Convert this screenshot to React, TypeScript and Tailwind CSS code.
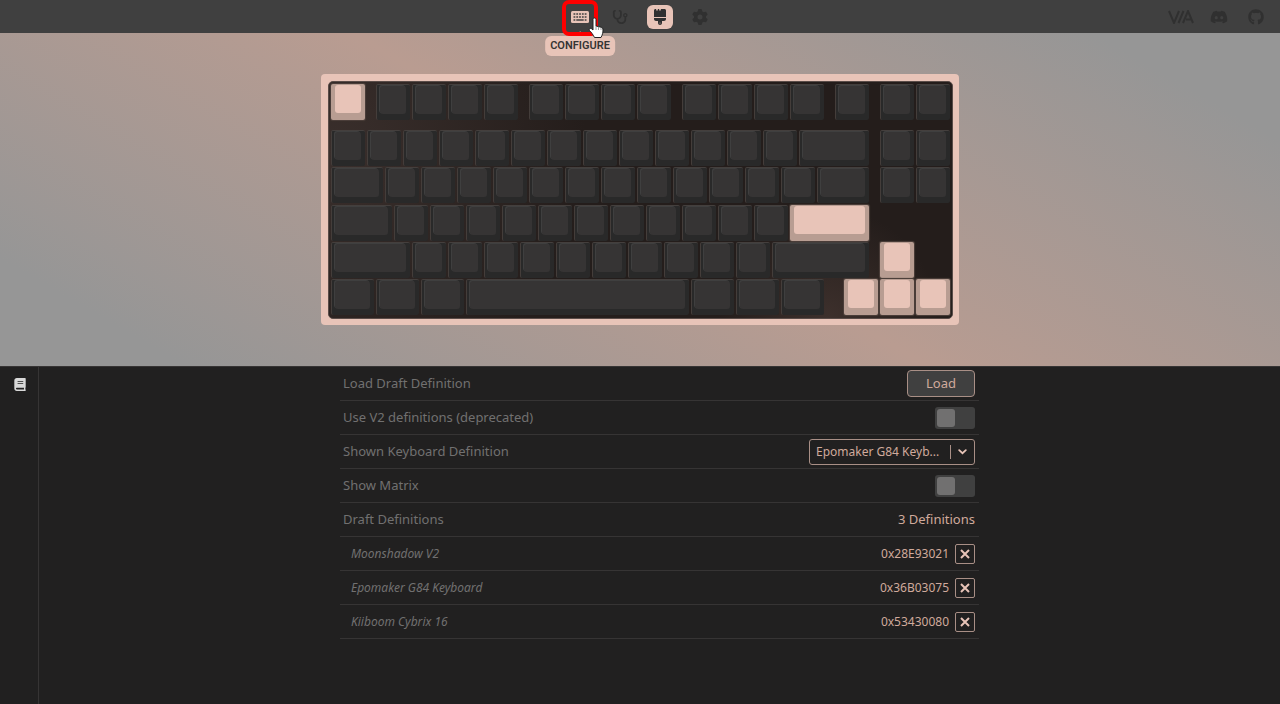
import React from 'react';
import { FaDiscord, FaGear, FaGithub, FaStethoscope, FaBrush } from 'react-icons/fa6';
import { FaBook } from 'react-icons/fa';

type Key = {
  start: number;
  width: number;
  accent?: boolean;
};

// Positions and widths are in quarters of a key unit.
const run = (start: number, count: number): Key[] =>
  Array.from({ length: count }, (_, i) => ({ start: start + i * 4, width: 4 }));

const keyRows: Key[][] = [
  [
    { start: 0, width: 4, accent: true },
    ...run(5, 4),
    ...run(22, 4),
    ...run(39, 4),
    ...run(56, 1),
    ...run(61, 2),
  ],
  [...run(0, 13), { start: 52, width: 8 }, ...run(61, 2)],
  [{ start: 0, width: 6 }, ...run(6, 12), { start: 54, width: 6 }, ...run(61, 2)],
  [{ start: 0, width: 7 }, ...run(7, 11), { start: 51, width: 9, accent: true }],
  [
    { start: 0, width: 9 },
    ...run(9, 10),
    { start: 49, width: 11 },
    { start: 61, width: 4, accent: true },
  ],
  [
    { start: 0, width: 5 },
    { start: 5, width: 5 },
    { start: 10, width: 5 },
    { start: 15, width: 25 },
    { start: 40, width: 5 },
    { start: 45, width: 5 },
    { start: 50, width: 5 },
    { start: 57, width: 4, accent: true },
    { start: 61, width: 4, accent: true },
    { start: 65, width: 4, accent: true },
  ],
];

const drafts = [
  { name: 'Moonshadow V2', id: '0x28E93021' },
  { name: 'Epomaker G84 Keyboard', id: '0x36B03075' },
  { name: 'Kiiboom Cybrix 16', id: '0x53430080' },
];

function Keycap({ start, width, accent }: Key) {
  return (
    <div
      className={`mr-[2px] flex h-9 rounded-[2px] pt-px ${
        accent
          ? 'bg-[#b89d92] px-1 pb-[7px] shadow-[0_0_1px_1px_#4d403b]'
          : 'border-t border-l border-t-[#443f3d] border-l-[#443d3a] bg-[#292929] pr-1 pb-[6px] pl-[3px]'
      }`}
      style={{ gridColumn: `${start + 1} / span ${width}` }}
    >
      <div
        className={`flex-1 rounded-[3px] ${
          accent ? 'bg-[#e8c4b8]' : 'bg-[#363434] shadow-[-1px_-1px_0_#3f3f3f]'
        }`}
      />
    </div>
  );
}

function Keyboard() {
  return (
    <div className="rounded-[4px] bg-[#e8c4b8] pt-[7px] pr-[6px] pb-[6px] pl-[7px]">
      <div className="rounded-[5px] border border-[#5a4c48] bg-[#241d1b] bg-[radial-gradient(circle_at_0%_30%,#3a2f2c,transparent_40%),radial-gradient(circle_at_80%_100%,#3d302c,transparent_20%)] pt-[2px] pb-[2px] pl-[2px]">
        {keyRows.map((row, i) => (
          <div
            key={i}
            className={`grid grid-cols-[repeat(69,9px)] ${
              i === 0 ? 'h-[46px]' : i === 2 ? 'h-[38px]' : 'h-[37px]'
            }`}
          >
            {row.map((key) => (
              <Keycap key={key.start} {...key} />
            ))}
          </div>
        ))}
      </div>
    </div>
  );
}

function KeyboardIcon() {
  return (
    <svg viewBox="0 0 18 12" className="h-3 w-[18px]">
      <rect width="18" height="12" rx="1.5" fill="#e8c4b8" />
      <path
        d="M2.500 3h13M2.500 6h13"
        stroke="#404040"
        strokeWidth="1.700"
        strokeDasharray="1.800 1"
      />
      <path d="M2.500 9h1.800M5.300 9h7.400M13.700 9h1.800" stroke="#404040" strokeWidth="1.500" />
    </svg>
  );
}

function Pointer() {
  return (
    <svg viewBox="0 0 16 22" className="absolute top-[12px] left-[21px] z-30 h-[22px] w-4">
      <path
        d="M5 2.500c0-2 3-2 3 0V9l5 1.200c1.500.4 2 1.300 2 2.800 0 3-.5 4.500-2 7.500H6.500C5 17.500 3 15 1.500 13.500c-1-1.200.6-2.800 2-1.800L5 13z"
        fill="#fff"
        stroke="#222"
        strokeWidth="1"
      />
      <path d="M8 9v4M10.500 9.500V13M13 10.500V13" stroke="#777" strokeWidth=".7" />
    </svg>
  );
}

function TopBar() {
  return (
    <header className="relative flex h-[33px] items-center justify-center bg-[#404040] text-[#303030]">
      <nav className="flex items-center gap-[14px]">
        <div className="relative">
          <button
            aria-label="Configure"
            className="flex h-6 w-[26px] items-center justify-center"
          >
            <KeyboardIcon />
          </button>
          <div className="absolute top-[31px] left-1/2 z-10 flex -translate-x-1/2 flex-col items-center">
            <div className="absolute -top-[3px] size-2 rotate-45 bg-[#e8c4b8]" />
            <span className="relative rounded-md bg-[#e8c4b8] px-[5px] font-[Roboto,sans-serif] text-[11px] leading-5 font-semibold text-[#363434]">
              CONFIGURE
            </span>
          </div>
          <div className="absolute -top-[5px] -left-[5px] z-20 size-9 rounded-[7px] border-4 border-[#fe0000]" />
          <Pointer />
        </div>
        <button aria-label="Test" className="flex h-6 w-[26px] items-center justify-center">
          <FaStethoscope className="size-4" />
        </button>
        <button
          aria-label="Design"
          className="flex h-6 w-[26px] items-center justify-center rounded-md bg-[#e8c4b8]"
        >
          <FaBrush className="size-4" />
        </button>
        <button aria-label="Settings" className="flex h-6 w-[26px] items-center justify-center">
          <FaGear className="size-4" />
        </button>
      </nav>
      <div className="absolute right-4 flex items-center gap-4">
        <a href="#via" aria-label="VIA">
          <svg
            viewBox="0 0 26 14"
            className="h-[14px] w-[26px]"
            fill="none"
            stroke="currentColor"
            strokeWidth="2"
          >
            <path d="M1 1l5 12L11 1M10.500 13L15.500 1M15 13l5-12 5 12M18 9.500h5" />
          </svg>
        </a>
        <a href="#discord" aria-label="Discord">
          <FaDiscord className="size-[18px]" />
        </a>
        <a href="#github" aria-label="GitHub" className="ml-1">
          <FaGithub className="size-4" />
        </a>
      </div>
    </header>
  );
}

interface RowProps {
  label: string;
  htmlFor?: string;
  children: React.ReactNode;
}

function Row({ label, htmlFor, children }: RowProps) {
  return (
    <div className="flex h-[34px] items-center justify-between border-b border-[#363434] pr-1 pl-[3px]">
      {htmlFor ? <label htmlFor={htmlFor}>{label}</label> : <span>{label}</span>}
      {children}
    </div>
  );
}

function Toggle({ id }: { id: string }) {
  return (
    <input
      id={id}
      type="checkbox"
      className="h-[22px] w-10 appearance-none rounded-[3px] bg-[#404040] before:mt-[2px] before:ml-[2px] before:block before:size-[18px] before:rounded-[3px] before:bg-[#717070] checked:before:ml-5"
    />
  );
}

function DefinitionSelect({ id }: { id: string }) {
  return (
    <div className="relative flex items-center">
      <select
        id={id}
        className="h-[26px] w-[166px] appearance-none rounded-[3px] border border-[#a98f86] bg-[#212020] pl-[6px] text-[12px] text-[#d0aa9c]"
      >
        <option>Epomaker G84 Keyb...</option>
        <option>Moonshadow V2</option>
        <option>Kiiboom Cybrix 16</option>
      </select>
      <div className="pointer-events-none absolute right-2 flex items-center gap-[7px]">
        <div className="h-[14px] w-px bg-[#a98f86]" />
        <svg
          viewBox="0 0 9 6"
          className="h-[6px] w-[9px]"
          fill="none"
          stroke="#e8c4b8"
          strokeWidth="1.8"
          strokeLinecap="round"
        >
          <path d="M1.200 1.200l3.300 3 3.300-3" />
        </svg>
      </div>
    </div>
  );
}

export default function App() {
  return (
    <div className="flex min-h-screen flex-col bg-[#212020] font-['Noto_Sans',sans-serif] text-[13px] text-[#717070]">
      <TopBar />
      <section className="flex h-[333px] items-start justify-center bg-[linear-gradient(30deg,#969696_10%,#b99c91_50%,#969696_90%)] pt-[41px]">
        <Keyboard />
      </section>
      <main className="flex flex-1 border-t border-[#363434]">
        <aside className="w-[39px] border-r border-[#363434] pt-[10px] pl-[14px]">
          <button aria-label="Definitions" className="text-[#d9d9d9]">
            <FaBook className="h-[13px] w-3" />
          </button>
        </aside>
        <div className="flex flex-1 justify-center">
          <div className="w-full max-w-[639px]">
            <Row label="Load Draft Definition">
              <button className="h-[27px] rounded-[4px] border border-[#a98f86] bg-[#404040] px-[18px] text-[#d0aa9c]">
                Load
              </button>
            </Row>
            <Row label="Use V2 definitions (deprecated)" htmlFor="v2">
              <Toggle id="v2" />
            </Row>
            <Row label="Shown Keyboard Definition" htmlFor="definition">
              <DefinitionSelect id="definition" />
            </Row>
            <Row label="Show Matrix" htmlFor="matrix">
              <Toggle id="matrix" />
            </Row>
            <Row label="Draft Definitions">
              <span className="text-[#d0aa9c]">3 Definitions</span>
            </Row>
            {drafts.map((draft) => (
              <div
                key={draft.id}
                className="flex h-[34px] items-center border-b border-[#363434] pr-1 pl-[11px] text-[12px]"
              >
                <span className="flex-1 italic">{draft.name}</span>
                <span className="text-[#d0aa9c]">{draft.id}</span>
                <button
                  aria-label={`Remove ${draft.name}`}
                  className="ml-[6px] flex size-5 items-center justify-center rounded-[2px] border border-[#a98f86]"
                >
                  <svg viewBox="0 0 10 10" className="size-[10px]" stroke="#e8c4b8" strokeWidth="2">
                    <path d="M1 1l8 8M9 1L1 9" />
                  </svg>
                </button>
              </div>
            ))}
          </div>
        </div>
      </main>
    </div>
  );
}
